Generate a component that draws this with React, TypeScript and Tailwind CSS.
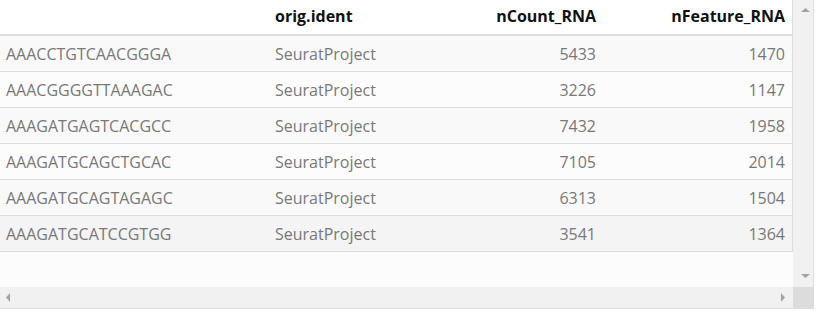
import React from "react";

const rows = [
  ["AAACCTGTCAACGGGA", "SeuratProject", "5433", "1470"],
  ["AAACGGGGTTAAAGAC", "SeuratProject", "3226", "1147"],
  ["AAAGATGAGTCACGCC", "SeuratProject", "7432", "1958"],
  ["AAAGATGCAGCTGCAC", "SeuratProject", "7105", "2014"],
  ["AAAGATGCAGTAGAGC", "SeuratProject", "6313", "1504"],
  ["AAAGATGCATCCGTGG", "SeuratProject", "3541", "1364"],
];

const rowBg = ["bg-[#f9f9f9]", "bg-[#fcfcfc]", "bg-[#f9f9f9]", "bg-[#fcfcfc]", "bg-[#f9f9f9]", "bg-[#f4f4f4]"];

export default function App() {
  return (
    <div className="w-[817px] h-[311px] bg-white" style={{ fontFamily: '"Open Sans", sans-serif' }}>
      <div className="w-[814px] h-[309px] border-r border-b border-[#dedede] flex flex-col bg-[#fcfcfc]">
        <div className="flex flex-1 min-h-0">
          <div className="w-[793px]">
            <div className="w-[793px] border-r border-[#dddddd]">
              <div className="grid grid-cols-[269px_200px_134px_189px] h-[36px] pb-[2px] bg-white border-b-2 border-[#dddddd] text-[16px] font-bold text-[#111] items-center">
                <div className="px-[6px]"></div>
                <div className="px-[6px]">orig.ident</div>
                <div className="px-[7px] text-right">nCount_RNA</div>
                <div className="px-[7px] text-right">nFeature_RNA</div>
              </div>
              {rows.map((r, i) => (
                <div
                  key={i}
                  className={`grid grid-cols-[269px_200px_134px_189px] h-[36px] border-b border-[#dddddd] text-[16px] text-[#787878] items-center ${rowBg[i]}`}
                >
                  <div className="px-[6px]">{r[0]}</div>
                  <div className="px-[6px]">{r[1]}</div>
                  <div className="px-[7px] text-right">{r[2]}</div>
                  <div className="px-[7px] text-right">{r[3]}</div>
                </div>
              ))}
            </div>
          </div>
          <div className="w-[20px] bg-[#f1f1f1] flex flex-col justify-between items-center py-[8px]">
            <svg width="9" height="4" viewBox="0 0 9 4" className="ml-[4px]">
              <polygon points="0,4 9,4 4.5,0" fill="#a3a3a3" />
            </svg>
            <svg width="9" height="4" viewBox="0 0 9 4" className="ml-[4px] mb-[1px]">
              <polygon points="0,0 9,0 4.5,4" fill="#a3a3a3" />
            </svg>
          </div>
        </div>
        <div className="flex h-[21px]">
          <div className="w-[793px] bg-[#f1f1f1] flex justify-between items-center px-[6px]">
            <svg width="4" height="9" viewBox="0 0 4 9">
              <polygon points="4,0 4,9 0,4.5" fill="#a3a3a3" />
            </svg>
            <svg width="4" height="9" viewBox="0 0 4 9" className="mr-[2px]">
              <polygon points="0,0 0,9 4,4.5" fill="#a3a3a3" />
            </svg>
          </div>
          <div className="w-[20px] bg-[#dcdcdc]"></div>
        </div>
      </div>
    </div>
  );
}
